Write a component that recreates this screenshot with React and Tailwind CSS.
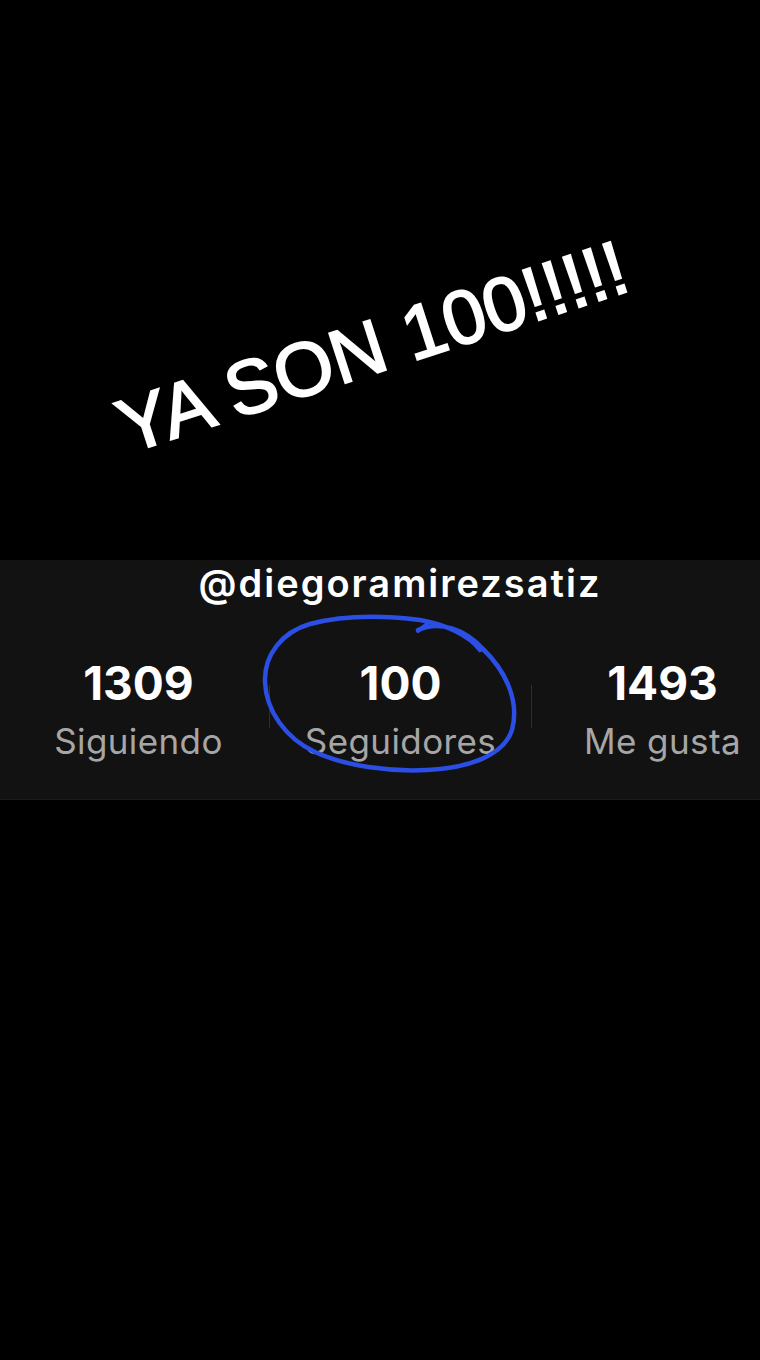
const stats = [
  { value: "1309", label: "Siguiendo" },
  { value: "100", label: "Seguidores" },
  { value: "1493", label: "Me gusta" },
];

const Stat = ({ value, label }) => (
  <div className="w-[261px] shrink-0 flex flex-col items-center">
    <span className="text-[46px] leading-[50px] font-bold text-white">{value}</span>
    <span className="mt-[13px] text-[35px] leading-[40px] tracking-[0.4px] text-[#a6a6a6]">{label}</span>
  </div>
);

const Divider = () => <div className="w-px h-[43px] shrink-0 mt-[27px] bg-[#2e2e2e]" />;

const App = () => {
  return (
    <div className="min-h-[1360px] bg-black overflow-hidden" style={{ fontFamily: "Inter, 'Liberation Sans', sans-serif" }}>
      <div className="h-[560px] flex items-start justify-center">
        <h1
          className="mt-[309px] mr-[16px] text-[76px] leading-none text-white whitespace-nowrap -rotate-[18deg] [-webkit-text-stroke:2px_white]"
          style={{ fontFamily: "'Liberation Sans', Arial, sans-serif" }}
        >
          YA SON 100!!!!!
        </h1>
      </div>

      <div className="relative h-[240px] bg-[#121212] border-b border-[#1c1c1c] overflow-hidden">
        <div className="pt-px pl-[40px] text-center text-[38px] leading-[44px] font-semibold tracking-[2px] text-white">
          @diegoramirezsatiz
        </div>
        <div className="flex ml-[8px] mt-[53px]">
          <Stat {...stats[0]} />
          <Divider />
          <Stat {...stats[1]} />
          <Divider />
          <Stat {...stats[2]} />
        </div>

        <svg className="absolute inset-0 pointer-events-none" width="760" height="240" viewBox="0 0 760 240">
          <path
            d="M 418 70 C 440 60, 465 70, 482 88 C 505 110, 520 140, 512 170 C 504 195, 470 208, 427 210 C 390 212, 345 206, 315 192 C 285 178, 266 150, 265 122 C 264 95, 282 72, 310 64 C 340 56, 380 55, 420 60 C 445 64, 470 76, 480 90"
            fill="none"
            stroke="#2b4ee4"
            strokeWidth="4.5"
            strokeLinecap="round"
            strokeLinejoin="round"
          />
          <path d="M 418 71 L 427 64" fill="none" stroke="#2b4ee4" strokeWidth="4" strokeLinecap="round" />
        </svg>
      </div>
    </div>
  );
};

export default App;
